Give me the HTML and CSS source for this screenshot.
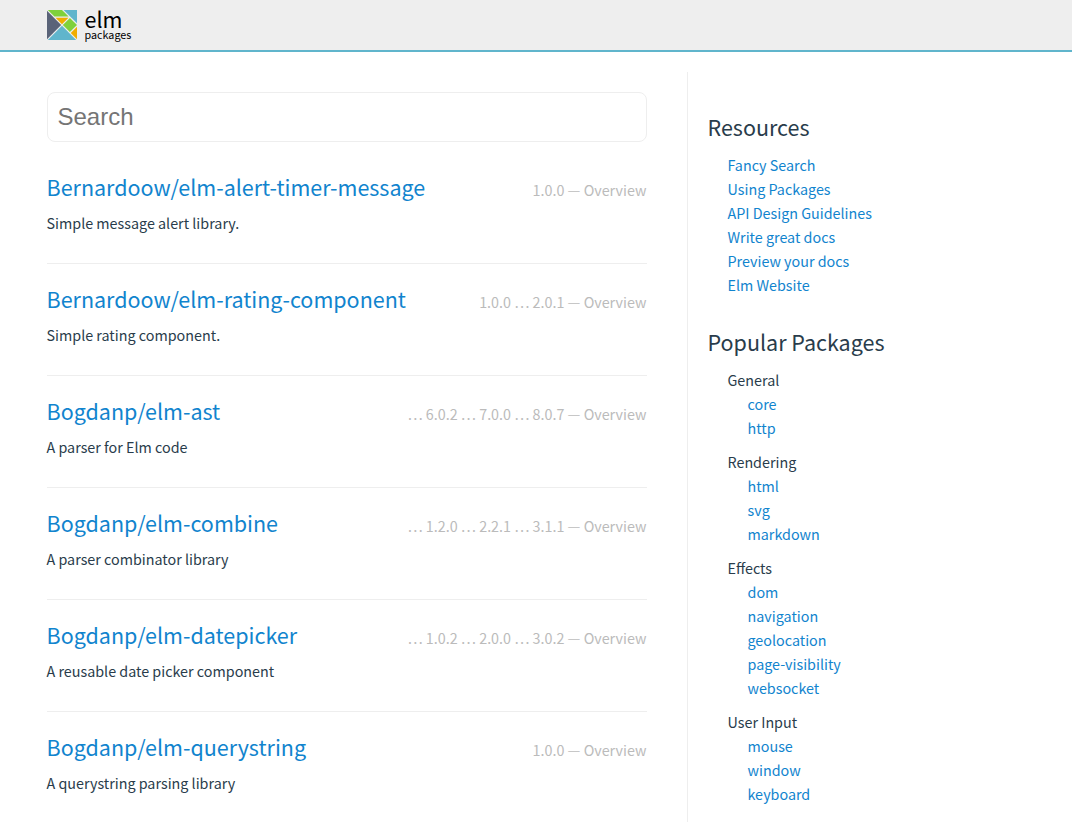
FILE: index.html
```html
<!DOCTYPE html>
<html lang="en">
<head>
<meta charset="utf-8">
<title>Elm Packages</title>
<link rel="stylesheet" href="styles.css">
</head>
<body>
<header class="header">
  <a class="brand" href="#">
    <svg class="logo" viewBox="0 0 323.141 322.95" width="30" height="30">
      <polygon fill="#F0AD00" points="161.649,152.782 231.514,82.916 91.783,82.916"/>
      <polygon fill="#7FD13B" points="8.867,0 79.241,70.375 232.213,70.375 161.838,0"/>
      <rect fill="#7FD13B" x="192.99" y="107.392" width="107.676" height="108.167" transform="matrix(0.7071 0.7071 -0.7071 0.7071 186.4727 -127.2386)"/>
      <polygon fill="#60B5CC" points="323.298,143.724 323.298,0 179.573,0"/>
      <polygon fill="#5A6378" points="152.781,161.649 0,8.868 0,314.432"/>
      <polygon fill="#F0AD00" points="255.522,246.655 323.298,314.432 323.298,178.879"/>
      <polygon fill="#60B5CC" points="161.649,170.517 8.869,323.298 314.43,323.298"/>
    </svg>
    <span class="brand-text"><span class="brand-name">elm</span><span class="brand-sub">packages</span></span>
  </a>
</header>
<div class="center">
  <main class="catalog">
    <input class="search" type="text" placeholder="Search">
    <section class="entry"><div class="row"><a class="name" href="#">Bernardoow/elm-alert-timer-message</a><span class="versions">1.0.0 — Overview</span></div><p class="summary">Simple message alert library.</p></section>
    <section class="entry"><div class="row"><a class="name" href="#">Bernardoow/elm-rating-component</a><span class="versions">1.0.0 … 2.0.1 — Overview</span></div><p class="summary">Simple rating component.</p></section>
    <section class="entry"><div class="row"><a class="name" href="#">Bogdanp/elm-ast</a><span class="versions">… 6.0.2 … 7.0.0 … 8.0.7 — Overview</span></div><p class="summary">A parser for Elm code</p></section>
    <section class="entry"><div class="row"><a class="name" href="#">Bogdanp/elm-combine</a><span class="versions">… 1.2.0 … 2.2.1 … 3.1.1 — Overview</span></div><p class="summary">A parser combinator library</p></section>
    <section class="entry"><div class="row"><a class="name" href="#">Bogdanp/elm-datepicker</a><span class="versions">… 1.0.2 … 2.0.0 … 3.0.2 — Overview</span></div><p class="summary">A reusable date picker component</p></section>
    <section class="entry"><div class="row"><a class="name" href="#">Bogdanp/elm-querystring</a><span class="versions">1.0.0 — Overview</span></div><p class="summary">A querystring parsing library</p></section>
  </main>
  <aside class="sidebar">
    <h2>Resources</h2>
    <ul>
      <li><a href="#">Fancy Search</a></li>
      <li><a href="#">Using Packages</a></li>
      <li><a href="#">API Design Guidelines</a></li>
      <li><a href="#">Write great docs</a></li>
      <li><a href="#">Preview your docs</a></li>
      <li><a href="#">Elm Website</a></li>
    </ul>
    <h2>Popular Packages</h2>
    <ul class="groups">
      <li>General<ul><li><a href="#">core</a></li><li><a href="#">http</a></li></ul></li>
      <li>Rendering<ul><li><a href="#">html</a></li><li><a href="#">svg</a></li><li><a href="#">markdown</a></li></ul></li>
      <li>Effects<ul><li><a href="#">dom</a></li><li><a href="#">navigation</a></li><li><a href="#">geolocation</a></li><li><a href="#">page-visibility</a></li><li><a href="#">websocket</a></li></ul></li>
      <li>User Input<ul><li><a href="#">mouse</a></li><li><a href="#">window</a></li><li><a href="#">keyboard</a></li></ul></li>
    </ul>
  </aside>
</div>
</body>
</html>
```
FILE: styles.css
```css
* { box-sizing: border-box; }
html, body { height: 100%; }
body {
  margin: 0;
  overflow: hidden;
  background: #fff;
  color: #293c4b;
  font-family: "Source Sans Pro", "Noto Sans CJK SC", sans-serif;
  font-size: 14.34px;
  line-height: 24px;
}
a { color: #1184ce; text-decoration: none; }
.header {
  height: 52px;
  padding: 9px 46px 0 46.5px;
  background: #eee;
  border-bottom: 2px solid #60b5cc;
}
.brand { display: flex; gap: 8px; color: #000; }
.logo { display: block; margin-top: 1px; }
.brand-text { display: flex; flex-direction: column; }
.brand-name { font-size: 21.5px; line-height: 20px; }
.brand-sub { margin-top: 1px; font-size: 10.75px; line-height: 10px; }
.center { display: flex; height: 770px; padding: 20px 46px 0 46.5px; }
.catalog { width: 600px; padding-top: 20px; }
.search {
  display: block;
  width: 600px;
  height: 50px;
  padding: 10px;
  border: 1px solid #eee;
  border-radius: 8px;
  font-family: "Liberation Sans", Arial, sans-serif;
  font-size: 24px;
  outline: none;
}
.search::placeholder { color: #757575; }
.entry { height: 112px; padding-top: 17px; border-bottom: 1px solid #eee; }
.search + .entry { height: 122px; padding-top: 27px; }
.row { display: flex; justify-content: space-between; align-items: baseline; height: 36px; line-height: 36px; }
.name { font-size: 21.5px; }
.versions { color: #bbb; }
.summary { margin: 6px 0 0; }
.sidebar { width: 300px; margin-left: 40.5px; padding: 37px 0 0 20px; border-left: 1px solid #eee; }
.sidebar h2 { margin: 0 0 8px -0.5px; font-size: 21.5px; font-weight: 400; line-height: 36px; }
ul { margin: 0; padding: 0 0 0 20px; list-style: none; }
h2 + ul { margin: 0 0 27px -0.5px; }
.groups > li { margin-bottom: 10px; }
```
